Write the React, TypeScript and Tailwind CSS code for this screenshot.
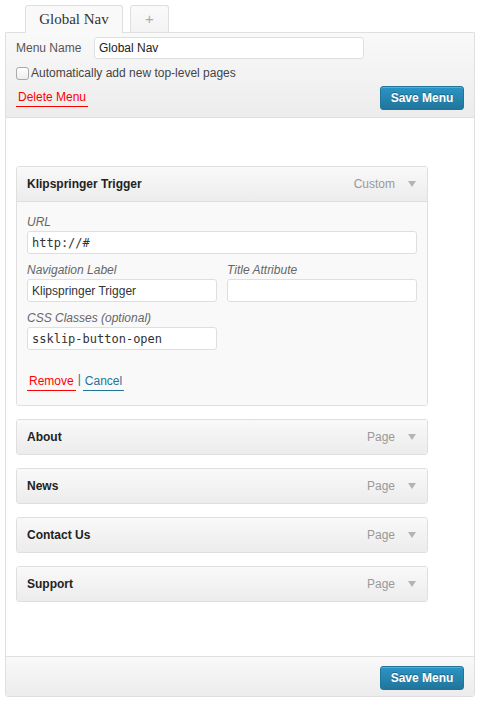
import React from "react";

const sans = { fontFamily: '"Liberation Sans", Arial, sans-serif' };

function Arrow() {
  return (
    <svg width="8" height="6" viewBox="0 0 8 6" className="ml-[13px]">
      <path d="M0 0 L8 0 L4 6 Z" fill="#b4b4b4" />
    </svg>
  );
}

function SaveButton() {
  return (
    <button className="h-[24px] w-[84px] rounded-[3px] border border-[#21759b] bg-gradient-to-b from-[#2a95c5] to-[#21759b] text-[12px] font-bold text-white [text-shadow:0_-1px_0_rgba(0,0,0,0.3)] shadow-[inset_0_1px_0_rgba(120,200,230,0.5)]">
      Save Menu
    </button>
  );
}

function ItemHeader({ title, type }: { title: string; type: string }) {
  return (
    <div className="flex h-[34px] items-center justify-between bg-gradient-to-b from-[#f9f9f9] to-[#ececec] pl-[10px] pr-[11px]">
      <span className="text-[12px] font-bold text-[#222]">{title}</span>
      <span className="flex items-center text-[12px] text-[#999]">
        {type}
        <Arrow />
      </span>
    </div>
  );
}

function Collapsed({ title }: { title: string }) {
  return (
    <div className="mt-[13px] overflow-hidden rounded-[3px] border border-[#dfdfdf]">
      <ItemHeader title={title} type="Page" />
    </div>
  );
}

function Field({ label, value, w }: { label: string; value: string; w: string }) {
  return (
    <div className={w}>
      <div className="h-[16px] text-[12px] italic leading-[16px] text-[#666]">{label}</div>
      <div
        className="mt-[1px] flex h-[23px] items-center rounded-[3px] border border-[#dfdfdf] bg-white px-[4px] text-[12px] text-[#333]"
        style={value.startsWith("Klip") ? sans : { fontFamily: '"DejaVu Sans Mono", monospace' }}
      >
        {value}
      </div>
    </div>
  );
}

export default function App() {
  return (
    <div className="h-[703px] w-[481px] bg-white" style={sans}>
      <div className="flex h-[32px] items-end gap-[7px] pl-[25px]">
        <div
          className="relative z-10 -mb-[1px] flex h-[28px] w-[98px] items-center justify-center rounded-t-[3px] border border-b-0 border-[#dfdfdf] bg-[#f9f9f9] text-[15px] text-[#333]"
          style={{ fontFamily: '"Liberation Serif", Georgia, serif' }}
        >
          Global Nav
        </div>
        <div className="flex h-[27px] w-[39px] items-center justify-center rounded-t-[3px] border border-b-0 border-[#dfdfdf] bg-gradient-to-b from-[#fafafa] to-[#f3f3f3] text-[15px] text-[#aaa]">
          +
        </div>
      </div>
      <div className="ml-[5px] w-[470px] overflow-hidden rounded-b-[3px] border border-[#dfdfdf]">
        <div className="h-[85px] border-b border-[#dfdfdf] bg-gradient-to-b from-[#f9f9f9] to-[#ececec] pl-[10px] pr-[10px]">
          <div className="flex items-center pt-[4px]">
            <span className="w-[78px] text-[12px] text-[#555]">Menu Name</span>
            <div className="flex h-[22px] w-[270px] items-center rounded-[3px] border border-[#dfdfdf] bg-white px-[4px] text-[12px] text-[#222]">
              Global Nav
            </div>
          </div>
          <div className="mt-[6px] flex h-[16px] items-center">
            <span className="h-[13px] w-[13px] rounded-[3px] border border-[#aaa] bg-gradient-to-b from-white to-[#eee]" />
            <span className="ml-[2px] text-[12px] text-[#444]">Automatically add new top-level pages</span>
          </div>
          <div className="mt-[5px] flex h-[24px] items-center justify-between">
            <span className="border-b border-[#f00] px-[2px] pb-[1px] text-[12px] leading-[16px] text-[#f00]">Delete Menu</span>
            <SaveButton />
          </div>
        </div>
        <div className="h-[538px] bg-white pl-[10px] pt-[48px]">
          <div className="w-[412px] overflow-hidden rounded-[3px] border border-[#dfdfdf]">
            <div className="border-b border-[#dfdfdf]">
              <ItemHeader title="Klipspringer Trigger" type="Custom" />
            </div>
            <div className="h-[203px] bg-[#f9f9f9] px-[10px] pt-[12px]">
              <Field label="URL" value="http://#" w="w-[390px]" />
              <div className="mt-[8px] flex gap-[10px]">
                <Field label="Navigation Label" value="Klipspringer Trigger" w="w-[190px]" />
                <Field label="Title Attribute" value="" w="w-[190px]" />
              </div>
              <div className="mt-[8px]">
                <Field label="CSS Classes (optional)" value="ssklip-button-open" w="w-[190px]" />
              </div>
              <div className="mt-[23px] flex items-start text-[12px] leading-[16px]">
                <span className="border-b border-[#f00] px-[2px] pb-[1px] text-[#f00]">Remove</span>
                <span className="mx-[2px] -mt-[2px] text-[#21759b]">|</span>
                <span className="border-b border-[#21759b] px-[2px] pb-[1px] text-[#21759b]">Cancel</span>
              </div>
            </div>
          </div>
          <div className="w-[412px]">
            <Collapsed title="About" />
            <Collapsed title="News" />
            <Collapsed title="Contact Us" />
            <Collapsed title="Support" />
          </div>
        </div>
        <div className="flex h-[40px] items-start justify-end border-t border-[#dfdfdf] bg-gradient-to-b from-[#f9f9f9] to-[#ececec] pr-[10px] pt-[9px]">
          <SaveButton />
        </div>
      </div>
    </div>
  );
}
